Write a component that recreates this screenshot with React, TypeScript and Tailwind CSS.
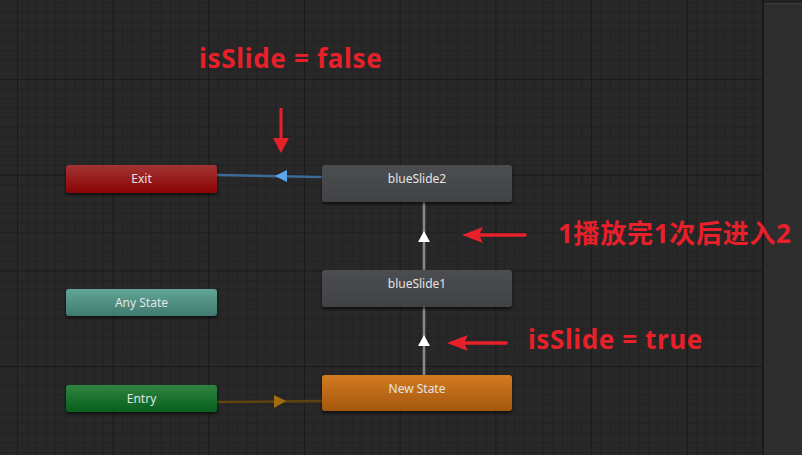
import React from 'react'

type NodeProps = {
  label: string
  className: string
}

// one state box on the animator canvas
function StateNode({ label, className }: NodeProps) {
  return (
    <div
      className={`absolute flex justify-center rounded-[3px] shadow-[0_2px_3px_rgba(0,0,0,0.6)] text-[12px] leading-4 text-[#e4e4e4] ${className}`}
      style={{ fontFamily: '"Noto Sans", "Open Sans", sans-serif' }}
    >
      {label}
    </div>
  )
}

function Edges() {
  return (
    <svg className="absolute inset-0" width="762" height="455" viewBox="0 0 762 455">
      {/* blueSlide2 -> Exit */}
      <line x1="322" y1="177" x2="217" y2="175" stroke="#3e6a98" strokeWidth="2.5" />
      <polygon points="275,176 287,170 287,182" fill="#5ea6ec" />
      {/* blueSlide1 -> blueSlide2 */}
      <line x1="424" y1="202" x2="424" y2="271" stroke="#8a8a8a" strokeWidth="2.5" />
      <polygon points="424,231 418,242 430,242" fill="#ffffff" />
      {/* New State -> blueSlide1 */}
      <line x1="424" y1="307" x2="424" y2="375" stroke="#8a8a8a" strokeWidth="2.5" />
      <polygon points="424,335 418,346 430,346" fill="#ffffff" />
      {/* Entry -> New State */}
      <line x1="217" y1="402" x2="322" y2="401" stroke="#5c4410" strokeWidth="2.5" />
      <polygon points="286,401 274,395 274,408" fill="#a36c0e" />

      {/* red annotation arrows */}
      <line x1="281" y1="108" x2="281" y2="142" stroke="#e8202a" strokeWidth="3" />
      <polygon points="273,138 289,138 281,153" fill="#e8202a" />
      <line x1="474" y1="235" x2="525" y2="235" stroke="#e8202a" strokeWidth="3.5" strokeLinecap="round" />
      <polygon points="462,235 483,227 479,235 483,243" fill="#e8202a" />
      <line x1="458" y1="343" x2="506" y2="343" stroke="#e8202a" strokeWidth="3.5" strokeLinecap="round" />
      <polygon points="447,343 468,335 464,343 468,351" fill="#e8202a" />
    </svg>
  )
}

function Note({ text, className }: { text: string; className: string }) {
  return (
    <div
      className={`absolute whitespace-nowrap font-bold text-[26px] leading-8 text-[#e8202a] ${className}`}
      style={{ fontFamily: '"Noto Sans", "Noto Sans CJK SC", sans-serif' }}
    >
      {text}
    </div>
  )
}

export default function App() {
  return (
    <div className="flex h-[455px] w-[802px] overflow-hidden bg-[#1c1c1c]">
      {/* Graph canvas */}
      <div className="relative h-full w-[762px] bg-[#282828] bg-[linear-gradient(to_right,#1b1b1b_1px,transparent_1px),linear-gradient(to_bottom,#1b1b1b_1px,transparent_1px),linear-gradient(to_right,#222222_1px,transparent_1px),linear-gradient(to_bottom,#222222_1px,transparent_1px)] bg-[size:95.7px_95.7px,95.7px_95.7px,9.57px_9.57px,9.57px_9.57px] bg-[position:17px_79px]">
        <Edges />

        <StateNode label="Exit" className="left-[66px] top-[165px] h-[28px] w-[151px] items-center bg-[linear-gradient(to_bottom,#a33434,#8c0404)]" />
        <StateNode label="Any State" className="left-[66px] top-[289px] h-[27px] w-[151px] items-center bg-[linear-gradient(to_bottom,#62a596,#3f7a70)]" />
        <StateNode label="Entry" className="left-[66px] top-[385px] h-[27px] w-[151px] items-center bg-[linear-gradient(to_bottom,#2e8440,#08601e)]" />

        <StateNode label="blueSlide2" className="left-[322px] top-[165px] h-[37px] w-[190px] pt-[6px] bg-[linear-gradient(to_bottom,#4c4d50,#414245)]" />
        <StateNode label="blueSlide1" className="left-[322px] top-[270px] h-[37px] w-[190px] pt-[6px] bg-[linear-gradient(to_bottom,#4c4d50,#414245)]" />
        <StateNode label="New State" className="left-[322px] top-[375px] h-[36px] w-[190px] pt-[6px] bg-[linear-gradient(to_bottom,#d27b22,#a4570c)]" />

        <Note text="isSlide = false" className="left-[199px] top-[42px] tracking-[0.7px]" />
        <Note text="1播放完1次后进入2" className="left-[558px] top-[217px] tracking-[0.7px]" />
        <Note text="isSlide = true" className="left-[528px] top-[323px] tracking-[0.6px]" />
      </div>

      {/* Inspector edge */}
      <div className="w-[2px] bg-[#1a1a1a]" />
      <div className="flex flex-1 flex-col">
        <div className="h-[3px] bg-[#222222]" />
        <div className="h-px bg-[#3c3c3c]" />
        <div className="flex-1 bg-[#2e2e2e]" />
      </div>
    </div>
  )
}
